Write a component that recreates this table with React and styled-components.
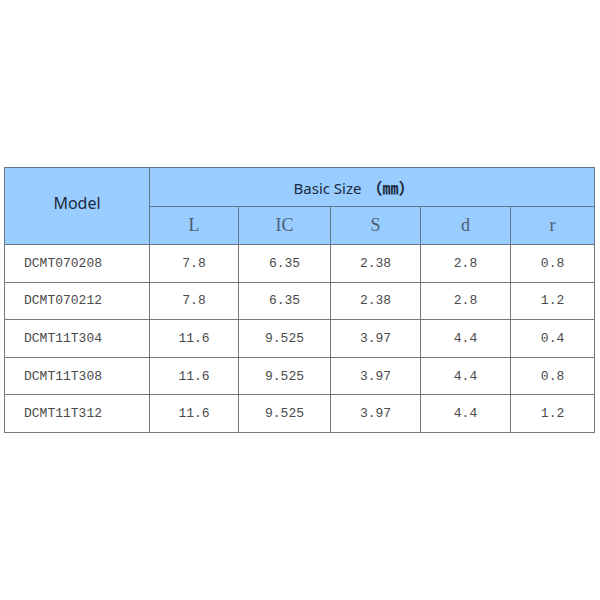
import React from 'react';
import styled, { createGlobalStyle } from 'styled-components';

const GlobalStyle = createGlobalStyle`
  html, body {
    margin: 0;
    padding: 0;
    background: #ffffff;
  }
`;

const Page = styled.div`
  width: 600px;
  height: 600px;
  padding: 167px 0 0 4px;
  box-sizing: border-box;
`;

const Table = styled.table`
  border-collapse: collapse;
  table-layout: fixed;
  width: 590px;
  border: 1px solid #333;
`;

const HeadCell = styled.th`
  background: #99ccff;
  border: 1px solid #66768a;
  height: ${p => p.$h || 37}px;
  padding: ${p => p.$pad || '0'};
  font-weight: normal;
  text-align: center;
  vertical-align: middle;
  color: ${p => (p.$sub ? '#4d5f73' : '#1b2a40')};
  font-family: ${p =>
    p.$sub
      ? '"Liberation Serif", "DejaVu Serif", serif'
      : '"Noto Sans", "Noto Sans CJK SC", sans-serif'};
  font-size: ${p => (p.$sub ? 18 : p.$size || 16)}px;
`;

const Unit = styled.span`
  font-family: "Noto Sans CJK SC", sans-serif;
  font-size: 16px;
  font-weight: 600;
  margin-left: 5px;
`;

const Cell = styled.td`
  border: 1px solid #777;
  height: 36.6px;
  padding: ${p => (p.$left ? '0 0 0 19px' : '0')};
  text-align: ${p => (p.$left ? 'left' : 'center')};
  vertical-align: middle;
  font-family: "Liberation Mono", "DejaVu Sans Mono", monospace;
  font-size: 13px;
  color: #4a4a4a;
`;

const widths = [145, 89, 92, 90, 90, 84];
const subHeads = ['L', 'IC', 'S', 'd', 'r'];

const rows = [
  ['DCMT070208', '7.8', '6.35', '2.38', '2.8', '0.8'],
  ['DCMT070212', '7.8', '6.35', '2.38', '2.8', '1.2'],
  ['DCMT11T304', '11.6', '9.525', '3.97', '4.4', '0.4'],
  ['DCMT11T308', '11.6', '9.525', '3.97', '4.4', '0.8'],
  ['DCMT11T312', '11.6', '9.525', '3.97', '4.4', '1.2'],
];

const App = () => (
  <Page>
    <GlobalStyle />
    <Table>
      <colgroup>
        {widths.map((w, i) => (
          <col key={i} style={{ width: w }} />
        ))}
      </colgroup>
      <thead>
        <tr>
          <HeadCell rowSpan={2} $pad="0 0 6px 0">
            Model
          </HeadCell>
          <HeadCell colSpan={5} $h={38} $size={15} $pad="0 36px 0 0">
            Basic Size<Unit>（㎜）</Unit>
          </HeadCell>
        </tr>
        <tr>
          {subHeads.map(h => (
            <HeadCell key={h} $sub>
              {h}
            </HeadCell>
          ))}
        </tr>
      </thead>
      <tbody>
        {rows.map(r => (
          <tr key={r[0] + r[5]}>
            {r.map((v, i) => (
              <Cell key={i} $left={i === 0}>
                {v}
              </Cell>
            ))}
          </tr>
        ))}
      </tbody>
    </Table>
  </Page>
);

export default App;
